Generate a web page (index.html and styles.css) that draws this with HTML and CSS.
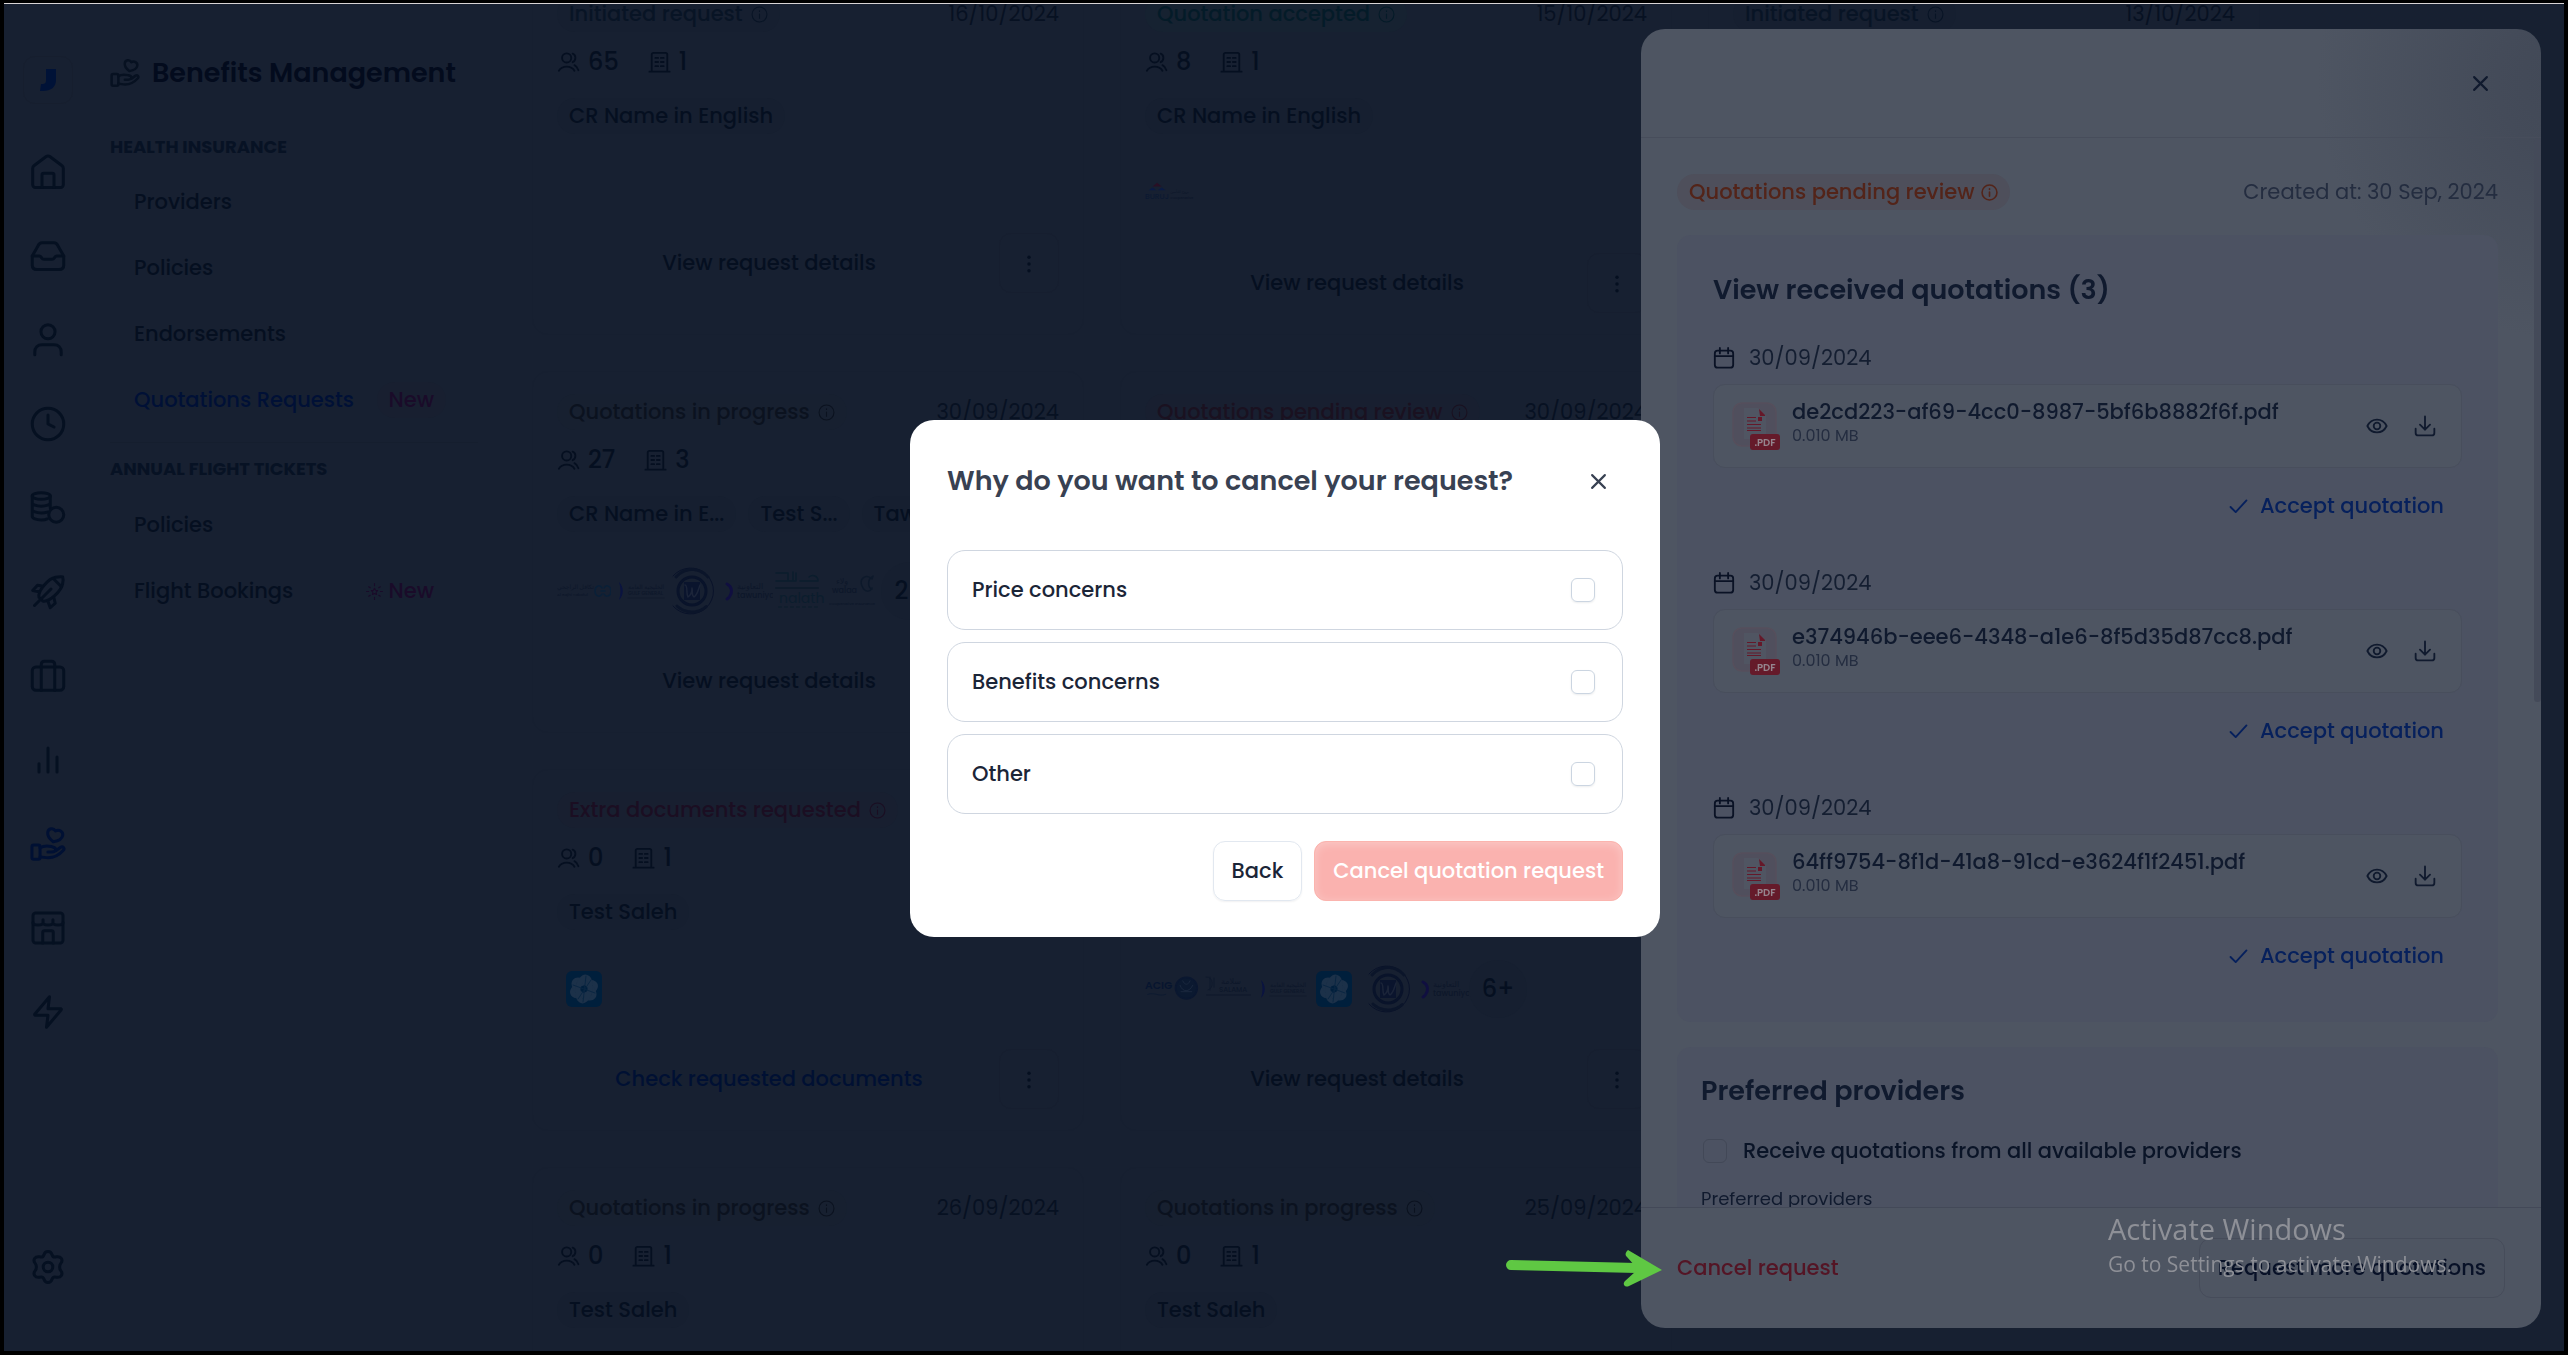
FILE: index.html
```html
<!DOCTYPE html>
<html lang="en">
<head>
  <meta charset="UTF-8">
  <meta name="viewport" content="width=device-width, initial-scale=1">
  <title>Benefits Management</title>
  <link rel="stylesheet" href="styles.css">
</head>
<body>
  <!-- Icon sprite -->
  <svg class="sprite" aria-hidden="true">
    <symbol id="i-home" viewBox="0 0 24 24"><path d="M1.800 9.500c0-.8.4-1.400 1-1.800l8-6c.7-.5 1.700-.5 2.400 0l8 6c.6.4 1 1 1 1.800V20.500c0 1-.8 1.800-1.800 1.800H3.600c-1 0-1.800-.8-1.800-1.800z"/><path d="M8 22.300V14c0-.8.4-1.200 1.200-1.200h5.600c.8 0 1.200.4 1.200 1.200v8.300"/></symbol>
    <symbol id="i-inbox" viewBox="0 0 24 24"><path d="M1.500 12h4.700c.8 0 1.100.5 1.500 1.100.4.700.800 1.100 1.600 1.100h5.400c.8 0 1.200-.4 1.600-1.100.4-.6.7-1.100 1.500-1.100h4.700"/><path d="M1.500 12v6c0 1.900 1.200 3 3 3h15c1.800 0 3-1.100 3-3v-6L18.500 5c-.5-1.200-1.300-1.800-2.500-1.800H8C6.800 3.200 6 3.800 5.500 5z"/></symbol>
    <symbol id="i-user" viewBox="0 0 24 24"><circle cx="12" cy="6.500" r="4.700"/><path d="M3.200 21.800V20c0-3 1.800-4.800 4.800-4.800h8c3 0 4.800 1.800 4.800 4.800v1.800"/></symbol>
    <symbol id="i-clock" viewBox="0 0 24 24"><circle cx="12" cy="12" r="10.500"/><path d="M12 6v6l4 2"/></symbol>
    <symbol id="i-coins" viewBox="0 0 24 24"><ellipse cx="7.500" cy="4" rx="6" ry="2.200"/><path d="M1.500 4v13.500c0 1.500 2.700 2.500 6 2.500 1.600 0 3-.2 4-.7M1.500 8.500c0 1.300 2.700 2.300 6 2.300s6-1 6-2.300M1.500 13c0 1.300 2.700 2.300 6 2.300 1.600 0 3-.2 4-.6M13.500 4v8"/><circle cx="17.500" cy="16.500" r="5"/></symbol>
    <symbol id="i-rocket" viewBox="0 0 24 24"><path d="M6 15.500C5 11 12.500 3 17 2.200c2-.4 4-.5 4.800-.2.400 1 .3 3-.1 4.800C20.800 11.300 13 19 8.500 18z"/><path d="M15.500 3l5.500 5.500M14 10L3 21M8 8L5 7.500 1.800 11l4.200.8M16 16l.8 3.500-3.300 3-1.500-4.200"/></symbol>
    <symbol id="i-case" viewBox="0 0 24 24"><rect x="1.500" y="6" width="21" height="15.500" rx="2.500"/><path d="M7.500 21.500V4.500c0-1.400.9-2.300 2.300-2.300h4.400c1.400 0 2.300.9 2.300 2.300v17"/></symbol>
    <symbol id="i-bars" viewBox="0 0 24 24"><path d="M6 14.500V20M12 4v16M18 10v10"/></symbol>
    <symbol id="i-hand" viewBox="0 0 24 24"><rect x="1.300" y="12.700" width="5.400" height="9.500" rx="1.200"/><path d="M6.700 14.500c3.300-2 5.800-1.200 8-.7 1.700.4 2.500.9 2.400 2-.1 1-1.100 1.500-2.600 1.500h-2.600M17.200 16.500l3-2.200c1.700-1.200 3.300.6 1.900 2.100-2.500 2.800-6 4.800-10 4.800-2.300 0-3.600-.7-5.400-.5"/><path d="M15.500 10.500C13 8.500 11.500 6.500 11.800 4.300c.4-2.800 3.800-3.400 5.200-1 2.300-1.200 5.300.3 4.800 3-.4 2.200-2.800 3.600-6.300 4.200z"/></symbol>
    <symbol id="i-store" viewBox="0 0 24 24"><rect x="2" y="2" width="20" height="20" rx="1.800"/><path d="M2 8.500c0 2 6.700 2 6.700 0 0 2 6.600 2 6.600 0 0 2 6.700 2 6.700 0M8.500 22v-7c0-.8.4-1.200 1.200-1.200h4.600c.8 0 1.200.4 1.200 1.200v7M8.700 6.500v2M15.300 6.500v2"/></symbol>
    <symbol id="i-bolt" viewBox="0 0 24 24"><path d="M13 1.800L3.300 13.300c-.4.500-.2.900.4.900H12l-1 8 9.700-11.500c.4-.5.2-.9-.4-.9H12z"/></symbol>
    <symbol id="i-gear" viewBox="0 0 24 24"><path d="M9.300 3.900c.8-3 4.600-3 5.400 0 .5 1.200 1.600 1.700 2.700 1.300 3.200-.6 5 2.100 3.100 4.400-1 1.100-1 3.700 0 4.800 1.900 2.300.1 5-3.100 4.400-1.100-.4-2.200.1-2.700 1.300-.8 3-4.600 3-5.400 0-.5-1.200-1.600-1.700-2.700-1.300-3.200.6-5-2.100-3.100-4.400 1-1.100 1-3.700 0-4.800-1.900-2.300-.1-5 3.100-4.400 1.100.4 2.200-.1 2.700-1.300z"/><circle cx="12" cy="12" r="3.200"/></symbol>
    <symbol id="i-info" viewBox="0 0 16 16"><circle cx="8" cy="8" r="7"/><path d="M8 7.500v4M8 4.500v.6"/></symbol>
    <symbol id="i-users" viewBox="0 0 24 24"><circle cx="10" cy="7.500" r="5"/><path d="M1.500 21.500c3.500-6 13.500-6 17 0M16.500 2.800c4 1.200 4 7.800 0 9.400M18.500 15.500c2 .9 3.400 2.700 4.300 5.500"/></symbol>
    <symbol id="i-building" viewBox="0 0 24 24"><path d="M3.500 22.500V4c0-1.300.7-2 2-2h13c1.300 0 2 .7 2 2v18.500M1 22.500h22M7.500 7.500h3M13.500 7.500h3M7.500 12h3M13.500 12h3M7.500 16.500h3M13.500 16.500h3"/></symbol>
    <symbol id="i-dots" viewBox="0 0 24 24"><circle cx="12" cy="3" r="2.300"/><circle cx="12" cy="12" r="2.300"/><circle cx="12" cy="21" r="2.300"/></symbol>
    <symbol id="i-close" viewBox="0 0 16 16"><path d="M2 2l12 12M14 2L2 14"/></symbol>
    <symbol id="i-calendar" viewBox="0 0 24 24"><rect x="2" y="4" width="20" height="18.500" rx="3"/><path d="M2 10h20M7.500 1v6M16.500 1v6"/></symbol>
    <symbol id="i-eye" viewBox="0 0 24 24"><path d="M1.500 12C6 2.700 18 2.700 22.500 12 18 21.300 6 21.300 1.500 12z"/><circle cx="12" cy="12" r="3.600"/></symbol>
    <symbol id="i-download" viewBox="0 0 24 24"><path d="M12 1.500V16M6.500 10.500L12 16l5.500-5.500M1.800 15v4.500c0 1.800 1 2.800 2.800 2.800h14.800c1.800 0 2.800-1 2.800-2.800V15"/></symbol>
    <symbol id="i-check" viewBox="0 0 20 16"><path d="M1.500 8.500L7 14 18.500 1.500"/></symbol>
    <symbol id="i-spark" viewBox="0 0 16 16"><path d="M8 5l1 1.900 2 .3-1.500 1.500.4 2.100L8 9.800l-1.900 1 .4-2.100L5 7.200l2-.3zM8 .5v2M8 13.500v2M.5 8h2M13.500 8h2M2.500 3.500l1.500 1M13.500 3.500l-1.500 1M2.500 12.500l1.500-1M13.500 12.500l-1.500-1"/></symbol>
    <symbol id="i-pdf" viewBox="0 0 48 48">
      <rect x="1" y="1" width="43" height="43" rx="9" fill="#504f5d" stroke="#564f5c" stroke-width="1.500"/>
      <path d="M12 6h14l8 8v23H12z" fill="#505562"/>
      <path d="M27 7l6 6v1h-5z" fill="#651829"/>
      <path d="M15 15.500h9M15 19h9M15 22.500h14M15 26h14M15 28.500h14" stroke="#651829" stroke-width="1.200" stroke-linecap="butt"/>
      <path d="M26 15h4v4h-4z" fill="#651829"/>
      <rect x="18" y="32" width="30" height="16" rx="3" fill="#651a2a"/>
      <text x="33" y="44" text-anchor="middle" font-size="10" font-weight="600" fill="#95868f">.PDF</text>
    </symbol>

    <!-- Provider logos -->
    <symbol id="l-rajhi" viewBox="0 0 54 48"><text x="0" y="22" font-size="6">تكافل الراجحي</text><text x="0" y="29" font-size="4">Al Rajhi Takaful</text><path d="M45 21c-2-4-7-2-7 3s5 7 7 3M47 21c2-4 7-2 7 3s-5 7-7 3M44 24h4" fill="none" stroke="#0a2038" stroke-width="1.500"/></symbol>
    <symbol id="l-gulf" viewBox="0 0 54 48"><path d="M8 15c5 5 5 13 0 18 2-6 2-12 0-18z" fill="#0a1340"/><text x="17" y="22" font-size="6">الخليجية العامة</text><text x="17" y="28" font-size="5">GULF GENERAL</text><path d="M17 31h36" stroke="#121b2d" stroke-width="1"/></symbol>
    <symbol id="l-seal" viewBox="0 0 54 54"><path d="M8 12a23 23 0 1 1 0 30" fill="none" stroke="#09122a" stroke-width="1"/><circle cx="27" cy="27" r="14" fill="none" stroke="#09132a" stroke-width="3"/><path d="M19 18h16v18H19z" fill="#0a142d"/><path d="M20 21c3 0 1 9 3 12 3-2 4-6 4-9 1 3-1 7 2 9 4-3 4-7 6-12" fill="none" stroke="#1b2439" stroke-width="1.500"/><path d="M11 13c9-10 23-10 32 0M12 42c9 8 21 8 30 0" fill="none" stroke="#0b152a" stroke-width="3" stroke-dasharray="2 1"/></symbol>
    <symbol id="l-tawuniya" viewBox="0 0 54 48"><path d="M8 17c6 3 6 11 0 15" fill="none" stroke="#100f40" stroke-width="3" stroke-dasharray="7 1"/><text x="18" y="22" font-size="8">التعاونية</text><text x="18" y="31" font-size="8">tawuniya</text></symbol>
    <symbol id="l-malath" viewBox="0 0 54 48"><path d="M3 6h12v8M3 14h20V6M20 5v9M27 14h18c0-5-5-7-9-4" fill="none" stroke="#0b1d2d" stroke-width="1.500"/><path d="M3 21h42" stroke="#0e1b2b"/><text x="6" y="36" font-size="14" font-weight="400" fill="#0b1d2d">nalath</text><path d="M6 40h38" stroke="#101e2d" stroke-dasharray="2 4"/></symbol>
    <symbol id="l-walaa" viewBox="0 0 54 48"><path d="M44 11c-6-4-12 1-9 8s8 6 10 2M45 10c-5 3-4 11 0 12M46 9l-1 3" fill="none" stroke="#0d192b" stroke-width="1.500"/><text x="9" y="17" font-size="8">ولاء</text><text x="5" y="26" font-size="8">walaa</text><text x="2" y="38" font-size="4">Cooperative Insurance</text></symbol>
    <symbol id="l-knot" viewBox="0 0 36 36"><rect width="36" height="36" rx="6" fill="#001f3c"/><g fill="none" stroke="#1c3149" stroke-width="5"><ellipse cx="18" cy="18" rx="12" ry="6" transform="rotate(-20 18 18)"/><ellipse cx="18" cy="18" rx="12" ry="6" transform="rotate(40 18 18)"/><ellipse cx="18" cy="18" rx="12" ry="6" transform="rotate(100 18 18)"/></g><path d="M7 14l22 8M12 28l13-19M20 5l-3 26" stroke="#0a2642" stroke-width="1"/></symbol>
    <symbol id="l-acig" viewBox="0 0 60 48"><text x="0" y="24" font-size="12" font-weight="600" fill="#07152f">ACIG</text><path d="M3 30c8-3 12 3 20 0" fill="none" stroke="#0c1a30" stroke-width="1"/><circle cx="46" cy="23" r="12" fill="#0b1930" stroke="#0a1730"/><path d="M39 20c3 8 10 8 14 0M42 15c2 5 6 5 8 0M40 27h12" fill="none" stroke="#1c2940" stroke-width="1"/></symbol>
    <symbol id="l-salama" viewBox="0 0 54 48"><path d="M7 12c8-1 8 12 2 13M11 12v13M15 13v9" fill="none" stroke="#0f192c" stroke-width="1"/><text x="22" y="19" font-size="8">سلامة</text><text x="20" y="27" font-size="7">SALAMA</text><path d="M8 30h44" stroke="#121b2d" stroke-dasharray="3 1"/></symbol>
    <symbol id="l-buruj" viewBox="0 0 58 24"><path d="M4 9l4-3 4 3z" fill="#0a1a44"/><path d="M8 5l5-4 5 4z" fill="#290f25"/><path d="M14 9l4-3 4 3z" fill="#0a1a44"/><text x="0" y="18" font-size="8" fill="#0b1932">BURUJ</text><text x="27" y="12" font-size="4">بروج للتأمين</text><text x="27" y="18" font-size="4">Cooperative</text></symbol>
  </svg>

  <div class="page">
    <nav class="rail" aria-label="Main">
      <a class="rail-logo" href="#" aria-label="Home page"><svg viewBox="0 0 16 22"><path d="M6 0h10v11c0 7-5 11-13 11H0l1-7h1c3 0 4-1 4-4z"/></svg></a>
      <a href="#" aria-label="Home"><svg><use href="#i-home"/></svg></a>
      <a href="#" aria-label="Inbox"><svg><use href="#i-inbox"/></svg></a>
      <a href="#" aria-label="People"><svg><use href="#i-user"/></svg></a>
      <a href="#" aria-label="Time"><svg><use href="#i-clock"/></svg></a>
      <a href="#" aria-label="Payroll"><svg><use href="#i-coins"/></svg></a>
      <a href="#" aria-label="Growth"><svg><use href="#i-rocket"/></svg></a>
      <a href="#" aria-label="Business"><svg><use href="#i-case"/></svg></a>
      <a href="#" aria-label="Reports"><svg><use href="#i-bars"/></svg></a>
      <a class="active" href="#" aria-label="Benefits"><svg><use href="#i-hand"/></svg></a>
      <a href="#" aria-label="Store"><svg><use href="#i-store"/></svg></a>
      <a href="#" aria-label="Integrations"><svg><use href="#i-bolt"/></svg></a>
      <a class="rail-bottom" href="#" aria-label="Settings"><svg><use href="#i-gear"/></svg></a>
    </nav>

    <aside class="menu">
      <h1 class="menu-title"><svg><use href="#i-hand"/></svg>Benefits Management</h1>
      <h2>HEALTH INSURANCE</h2>
      <a href="#">Providers</a>
      <a href="#">Policies</a>
      <a href="#">Endorsements</a>
      <a class="active" href="#">Quotations Requests <span class="new pill">New</span></a>
      <h2 class="divided">ANNUAL FLIGHT TICKETS</h2>
      <a href="#">Policies</a>
      <a href="#">Flight Bookings <span class="new"><svg><use href="#i-spark"/></svg>New</span></a>
    </aside>

    <main class="content">
      <div class="cards">
        <article class="card short">
          <header><span class="status initiated">Initiated request <svg><use href="#i-info"/></svg></span><time>16/10/2024</time></header>
          <div class="stats"><span><svg><use href="#i-users"/></svg>65</span><span><svg><use href="#i-building"/></svg>1</span></div>
          <div class="tags"><span>CR Name in English</span></div>
          <footer><button type="button">View request details</button><button type="button" class="more" aria-label="More"><svg><use href="#i-dots"/></svg></button></footer>
        </article>

        <article class="card">
          <header><span class="status accepted">Quotation accepted <svg><use href="#i-info"/></svg></span><time>15/10/2024</time></header>
          <div class="stats"><span><svg><use href="#i-users"/></svg>8</span><span><svg><use href="#i-building"/></svg>1</span></div>
          <div class="tags"><span>CR Name in English</span></div>
          <div class="logos"><svg class="buruj"><use href="#l-buruj"/></svg></div>
          <footer><button type="button">View request details</button><button type="button" class="more" aria-label="More"><svg><use href="#i-dots"/></svg></button></footer>
        </article>

        <article class="card">
          <header><span class="status initiated">Initiated request <svg><use href="#i-info"/></svg></span><time>13/10/2024</time></header>
        </article>

        <article class="card">
          <header><span class="status progress">Quotations in progress <svg><use href="#i-info"/></svg></span><time>30/09/2024</time></header>
          <div class="stats"><span><svg><use href="#i-users"/></svg>27</span><span><svg><use href="#i-building"/></svg>3</span></div>
          <div class="tags"><span>CR Name in E...</span><span>Test S...</span><span>Taw...</span></div>
          <div class="logos">
            <svg><use href="#l-rajhi"/></svg>
            <svg><use href="#l-gulf"/></svg>
            <svg class="seal"><use href="#l-seal"/></svg>
            <svg><use href="#l-tawuniya"/></svg>
            <svg><use href="#l-malath"/></svg>
            <svg><use href="#l-walaa"/></svg>
            <span class="extra">2+</span>
          </div>
          <footer><button type="button">View request details</button></footer>
        </article>

        <article class="card">
          <header><span class="status pending">Quotations pending review <svg><use href="#i-info"/></svg></span><time>30/09/2024</time></header>
        </article>

        <article class="card"></article>

        <article class="card">
          <header><span class="status documents">Extra documents requested <svg><use href="#i-info"/></svg></span></header>
          <div class="stats"><span><svg><use href="#i-users"/></svg>0</span><span><svg><use href="#i-building"/></svg>1</span></div>
          <div class="tags"><span>Test Saleh</span></div>
          <div class="logos"><svg class="knot"><use href="#l-knot"/></svg></div>
          <footer><button type="button" class="primary">Check requested documents</button><button type="button" class="more" aria-label="More"><svg><use href="#i-dots"/></svg></button></footer>
        </article>

        <article class="card">
          <div class="logos">
            <svg><use href="#l-acig"/></svg>
            <svg><use href="#l-salama"/></svg>
            <svg><use href="#l-gulf"/></svg>
            <svg class="knot"><use href="#l-knot"/></svg>
            <svg class="seal"><use href="#l-seal"/></svg>
            <svg><use href="#l-tawuniya"/></svg>
            <span class="extra">6+</span>
          </div>
          <footer><button type="button">View request details</button><button type="button" class="more" aria-label="More"><svg><use href="#i-dots"/></svg></button></footer>
        </article>

        <article class="card"></article>

        <article class="card">
          <header><span class="status progress">Quotations in progress <svg><use href="#i-info"/></svg></span><time>26/09/2024</time></header>
          <div class="stats"><span><svg><use href="#i-users"/></svg>0</span><span><svg><use href="#i-building"/></svg>1</span></div>
          <div class="tags"><span>Test Saleh</span></div>
        </article>

        <article class="card">
          <header><span class="status progress">Quotations in progress <svg><use href="#i-info"/></svg></span><time>25/09/2024</time></header>
          <div class="stats"><span><svg><use href="#i-users"/></svg>0</span><span><svg><use href="#i-building"/></svg>1</span></div>
          <div class="tags"><span>Test Saleh</span></div>
        </article>
      </div>
    </main>
  </div>

  <!-- Request details drawer -->
  <section class="drawer" aria-label="Request details">
    <div class="drawer-head"><button type="button" class="close" aria-label="Close"><svg><use href="#i-close"/></svg></button></div>
    <div class="drawer-body">
      <div class="drawer-status">
        <span class="review">Quotations pending review <svg><use href="#i-info"/></svg></span>
        <span class="created">Created at: 30 Sep, 2024</span>
      </div>

      <div class="panel quotations">
        <h2>View received quotations (3)</h2>
        <div class="quote">
          <p class="date"><svg><use href="#i-calendar"/></svg>30/09/2024</p>
          <div class="file">
            <svg class="pdf"><use href="#i-pdf"/></svg>
            <div class="file-name"><strong>de2cd223-af69-4cc0-8987-5bf6b8882f6f.pdf</strong><small>0.010 MB</small></div>
            <button type="button" aria-label="Preview"><svg><use href="#i-eye"/></svg></button>
            <button type="button" aria-label="Download"><svg><use href="#i-download"/></svg></button>
          </div>
          <button type="button" class="accept"><svg><use href="#i-check"/></svg>Accept quotation</button>
        </div>
        <div class="quote">
          <p class="date"><svg><use href="#i-calendar"/></svg>30/09/2024</p>
          <div class="file">
            <svg class="pdf"><use href="#i-pdf"/></svg>
            <div class="file-name"><strong>e374946b-eee6-4348-a1e6-8f5d35d87cc8.pdf</strong><small>0.010 MB</small></div>
            <button type="button" aria-label="Preview"><svg><use href="#i-eye"/></svg></button>
            <button type="button" aria-label="Download"><svg><use href="#i-download"/></svg></button>
          </div>
          <button type="button" class="accept"><svg><use href="#i-check"/></svg>Accept quotation</button>
        </div>
        <div class="quote">
          <p class="date"><svg><use href="#i-calendar"/></svg>30/09/2024</p>
          <div class="file">
            <svg class="pdf"><use href="#i-pdf"/></svg>
            <div class="file-name"><strong>64ff9754-8f1d-41a8-91cd-e3624f1f2451.pdf</strong><small>0.010 MB</small></div>
            <button type="button" aria-label="Preview"><svg><use href="#i-eye"/></svg></button>
            <button type="button" aria-label="Download"><svg><use href="#i-download"/></svg></button>
          </div>
          <button type="button" class="accept"><svg><use href="#i-check"/></svg>Accept quotation</button>
        </div>
      </div>

      <div class="panel providers">
        <h2>Preferred providers</h2>
        <label class="all"><input type="checkbox">Receive quotations from all available providers</label>
        <p>Preferred providers</p>
      </div>
      <div class="scrollbar"></div>
    </div>
    <div class="drawer-foot">
      <button type="button" class="cancel">Cancel request</button>
      <button type="button" class="request">Request more quotations</button>
    </div>
  </section>

  <!-- Cancel reason dialog -->
  <div class="modal-wrap">
    <form class="modal" role="dialog" aria-labelledby="modal-title">
      <div class="modal-head">
        <h2 id="modal-title">Why do you want to cancel your request?</h2>
        <button type="button" class="close" aria-label="Close"><svg><use href="#i-close"/></svg></button>
      </div>
      <label class="option">Price concerns<input type="checkbox"></label>
      <label class="option">Benefits concerns<input type="checkbox"></label>
      <label class="option">Other<input type="checkbox"></label>
      <div class="modal-actions">
        <button type="button" class="back">Back</button>
        <button type="submit" class="submit" disabled>Cancel quotation request</button>
      </div>
    </form>
  </div>

  <svg class="arrow" viewBox="0 0 156 44" aria-hidden="true"><path d="M5 17l126 3"/><path d="M122 2c-3 3-3 5-1 7l9 10-1 5-10 9c-3 3 0 7 4 5l33-16z"/></svg>

  <div class="watermark">
    <p class="watermark-title">Activate Windows</p>
    <p>Go to Settings to activate Windows.</p>
  </div>
</body>
</html>
```
FILE: styles.css
```css
* {
  box-sizing: border-box;
}

body {
  margin: 0;
  height: 100vh;
  overflow: hidden;
  border: 4px solid #000;
  border-top-width: 3px;
  background-color: #172031;
  font-family: Poppins, Inter, 'DejaVu Sans', sans-serif;
  font-size: 21px;
  font-weight: 500;
  line-height: 32px;
  color: #050f20;
}

h1, h2, p {
  margin: 0;
}

a {
  color: inherit;
  text-decoration: none;
}

button {
  font: inherit;
  color: inherit;
  background: none;
  border: none;
  padding: 0;
  cursor: pointer;
}

svg {
  fill: none;
  stroke: currentColor;
  stroke-width: 2;
  stroke-linecap: round;
  stroke-linejoin: round;
  flex: none;
}

svg text {
  stroke: none;
}

.sprite {
  display: none;
}

.page {
  display: flex;
  height: 100%;
  overflow: hidden;
  border-top: 1px solid #d8d4d6;
}

/* Icon rail */
.rail {
  width: 88px;
  padding: 52px 0 66px;
  display: flex;
  flex-direction: column;
  align-items: center;
  gap: 48px;
  color: #051021;
}

.rail a {
  display: flex;
}

.rail svg {
  width: 36px;
  height: 36px;
}

.rail .rail-logo {
  width: 50px;
  height: 48px;
  margin-bottom: 2px;
  align-items: center;
  justify-content: center;
  border: 1px solid #161e2e;
  border-radius: 12px;
}

.rail .rail-logo svg {
  width: 16px;
  height: 26px;
  fill: #001237;
  stroke: none;
}

.rail .active {
  color: #001033;
}

.rail .rail-bottom {
  margin-top: auto;
}

/* Side menu */
.menu {
  width: 368px;
  margin-left: 18px;
  padding-top: 47px;
}

.menu-title {
  display: flex;
  align-items: center;
  gap: 12px;
  height: 44px;
  margin-bottom: 35px;
  font-size: 27px;
  font-weight: 600;
  color: #030b1d;
}

.menu-title svg {
  width: 30px;
  height: 30px;
  color: #071121;
}

.menu h2 {
  height: 39px;
  line-height: 34px;
  font-size: 18px;
  font-weight: 700;
  color: #071224;
}

.menu .divided {
  border-top: 1px solid #151e2e;
  margin: 9px 0 2px;
  height: 48px;
  line-height: 52px;
}

.menu a {
  display: flex;
  align-items: center;
  justify-content: space-between;
  height: 66px;
  padding: 0 32px 0 24px;
}

.menu .active {
  color: #001036;
}

.new {
  display: flex;
  align-items: center;
  gap: 6px;
  padding: 2px 12px;
  color: #1a0b29;
}

.new svg {
  width: 17px;
  height: 17px;
  stroke-width: 1;
}

.new.pill {
  background-color: #181f30;
  border-radius: 18px;
}

/* Request cards, scrolled up by part of the first row */
.content {
  flex: 1;
  padding: 0 304px 0 54px;
}

.cards {
  display: grid;
  grid-template-columns: repeat(3, minmax(0, 1fr));
  gap: 36px;
  margin-top: -31px;
}

.card {
  display: grid;
  grid-template-rows: 50px 42px 66px 99px 60px;
  align-content: start;
  height: 362px;
  padding: 22px 24px 20px;
  border: 1px solid #161f30;
  border-radius: 16px;
}

.card.short {
  grid-template-rows: 50px 42px 66px 79px 60px;
}

.card header {
  grid-row: 1;
  display: flex;
  justify-content: space-between;
  height: 36px;
  line-height: 36px;
}

.card time {
  font-weight: 400;
  color: #071122;
}

.status {
  display: flex;
  align-items: center;
  gap: 8px;
  padding: 0 12px;
  border-radius: 18px;
}

.status svg,
.review svg {
  width: 17px;
  height: 17px;
  stroke-width: 1;
}

.initiated {
  background-color: #161f30;
  color: #081425;
}

.accepted {
  background-color: #162231;
  color: #041b28;
}

.progress {
  background-color: #172030;
  color: #0b121f;
}

.pending {
  background-color: #181f30;
  color: #1a1120;
}

.documents {
  background-color: #181f30;
  color: #1b0e22;
}

.stats {
  grid-row: 2;
  display: flex;
  gap: 29px;
  height: 32px;
  font-size: 24px;
}

.stats span {
  display: flex;
  align-items: center;
  gap: 8px;
}

.stats svg {
  width: 23px;
  height: 22px;
}

.tags {
  grid-row: 3;
  display: flex;
  gap: 12px;
  padding-top: 10px;
}

.tags span {
  height: 36px;
  padding: 0 12px;
  line-height: 36px;
  border-radius: 18px;
  background-color: #161f30;
}

.logos {
  grid-row: 4;
  display: flex;
  align-items: center;
  height: 60px;
  margin-top: 9px;
}

.logos svg {
  width: 54px;
  height: 48px;
  fill: #0d172a;
  stroke: none;
}

.logos .seal {
  height: 54px;
}

.logos .buruj {
  height: 24px;
}

.logos .knot {
  width: 36px;
  height: 36px;
  margin: 0 9px;
}

.extra {
  width: 58px;
  height: 58px;
  border-radius: 50%;
  background-color: #161f30;
  font-size: 24px;
  line-height: 58px;
  text-align: center;
}

.card footer {
  grid-row: 5;
  display: flex;
  gap: 18px;
}

.card footer button {
  flex: 1;
}

.card footer .more {
  flex: none;
  width: 60px;
  height: 60px;
  border: 1px solid #161e2f;
  border-radius: 12px;
}

.card footer .primary {
  color: #001033;
}

.card footer:not(:has(.more)) {
  padding-right: 78px;
}

.more svg {
  width: 20px;
  height: 18px;
  fill: currentColor;
  stroke: none;
  vertical-align: middle;
}

/* Drawer */
.drawer {
  position: fixed;
  top: 29px;
  right: 27px;
  bottom: 27px;
  width: 900px;
  max-width: 90%;
  display: flex;
  flex-direction: column;
  border-radius: 24px;
  overflow: hidden;
  background: radial-gradient(circle at 104% 4%, #414856 0, #444b59 80px, rgba(78, 85, 98, 0) 260px), #4e5562;
  color: #101a2e;
}

.drawer-head {
  display: flex;
  justify-content: flex-end;
  align-items: center;
  height: 109px;
  padding-right: 52px;
  border-bottom: 1px solid #474d5b;
}

.close svg {
  width: 17px;
  height: 17px;
  display: block;
}

.drawer-body {
  position: relative;
  flex: 1;
  min-height: 0;
  overflow: hidden;
  padding: 36px 43px 0 36px;
}

.drawer-status {
  display: flex;
  justify-content: space-between;
  align-items: center;
  margin-bottom: 25px;
}

.review {
  display: flex;
  align-items: center;
  gap: 6px;
  height: 36px;
  padding: 0 12px;
  border-radius: 18px;
  background-color: #4e4f5b;
  color: #532419;
}

.review svg {
  stroke-width: 1.5;
}

.created {
  font-weight: 400;
  color: #242d40;
}

.panel {
  padding: 36px;
  border-radius: 14px;
  background-color: #4c5262;
  margin-bottom: 25px;
}

.panel h2 {
  font-size: 27px;
  font-weight: 600;
  line-height: 38px;
}

.quotations {
  height: 787px;
}

.quote {
  display: flex;
  flex-direction: column;
  height: 225px;
  padding-top: 31px;
}

.date {
  display: flex;
  align-items: center;
  gap: 14px;
  height: 36px;
  margin-bottom: 8px;
  font-weight: 400;
  color: #141e31;
}

.date svg {
  width: 22px;
  height: 22px;
  color: #0a1225;
}

.file {
  display: flex;
  align-items: center;
  gap: 26px;
  height: 84px;
  padding: 0 25px 0 18px;
  border: 1px solid #484e5c;
  border-radius: 12px;
  background-color: #4e5562;
}

.file svg {
  width: 22px;
  height: 22px;
  display: block;
}

.file .pdf {
  width: 48px;
  height: 48px;
  stroke: none;
  margin-right: -14px;
}

.file-name {
  flex: 1;
  display: flex;
  flex-direction: column;
  height: 60px;
}

.file-name strong {
  font-weight: 500;
}

.file-name small {
  font-size: 16px;
  font-weight: 400;
  line-height: 16px;
  color: #242d40;
}

.accept {
  display: flex;
  align-items: center;
  align-self: flex-end;
  gap: 12px;
  margin: 22px 18px 0 0;
  color: #06205c;
}

.accept svg {
  width: 19px;
  height: 15px;
}

.providers {
  height: 400px;
  padding: 25px 24px;
  color: #101a2e;
}

.all {
  display: flex;
  align-items: center;
  gap: 16px;
  margin: 25px 0 16px 2px;
  color: #0a1427;
}

input[type='checkbox'] {
  appearance: none;
  width: 24px;
  height: 24px;
  margin: 0;
  border: 1px solid #424857;
  border-radius: 6px;
}

.providers p {
  font-size: 18px;
  font-weight: 400;
}

.scrollbar {
  position: absolute;
  top: 0;
  right: 0;
  width: 7px;
  height: 564px;
  border-radius: 4px;
  background-color: #444a59;
}

.drawer-foot {
  display: flex;
  align-items: center;
  justify-content: space-between;
  height: 121px;
  padding: 0 36px;
  border-top: 1px solid #434958;
}

.cancel {
  color: #541525;
}

.request {
  height: 60px;
  padding: 0 18px;
  border: 1px solid #464c5a;
  border-radius: 12px;
  color: #081127;
}

/* Dialog */
.modal-wrap {
  position: fixed;
  inset: 2px 0 0 2px;
  display: flex;
  align-items: center;
  justify-content: center;
}

.modal {
  width: 750px;
  padding: 36px 37px;
  border-radius: 24px;
  background-color: #fff;
  color: #1b2537;
}

.modal-head {
  display: flex;
  align-items: center;
  justify-content: space-between;
  height: 50px;
  margin-bottom: 44px;
  padding-right: 16px;
  color: #384152;
}

.modal-head h2 {
  font-size: 27px;
  font-weight: 600;
}

.option {
  display: flex;
  align-items: center;
  justify-content: space-between;
  height: 80px;
  margin-bottom: 12px;
  padding: 0 27px 0 24px;
  border: 1px solid #cfd6e0;
  border-radius: 18px;
}

.option input[type='checkbox'] {
  border-color: #cbd5e1;
  box-shadow: 0 1px 2px rgba(15, 23, 42, 0.08);
}

.modal-actions {
  display: flex;
  justify-content: flex-end;
  gap: 12px;
  margin-top: 27px;
}

.modal-actions button {
  height: 60px;
  padding: 0 18px;
  border: 1px solid #e2e8f0;
  border-radius: 12px;
}

.modal-actions .back {
  box-shadow: 0 1px 2px rgba(15, 23, 42, 0.06);
}

.modal-actions .submit {
  border: 1px solid #fbb4ae;
  background-color: #fab2af;
  box-shadow: inset 0 2px 10px rgba(255, 255, 255, 0.3);
  color: #fff;
}

/* Pointer to the cancel button */
.arrow {
  position: fixed;
  left: 1506px;
  bottom: 63px;
  width: 156px;
  height: 44px;
  fill: #5fc843;
  stroke: none;
}

.arrow path:first-child {
  stroke: #5fc843;
  stroke-width: 10;
}

/* System watermark */
.watermark {
  position: fixed;
  right: 116px;
  bottom: 75px;
  font-family: 'Segoe UI', 'Open Sans', sans-serif;
  font-size: 21px;
  font-weight: 400;
  color: #8e9097;
  pointer-events: none;
}

.watermark-title {
  font-size: 29px;
  line-height: 38px;
}
```
